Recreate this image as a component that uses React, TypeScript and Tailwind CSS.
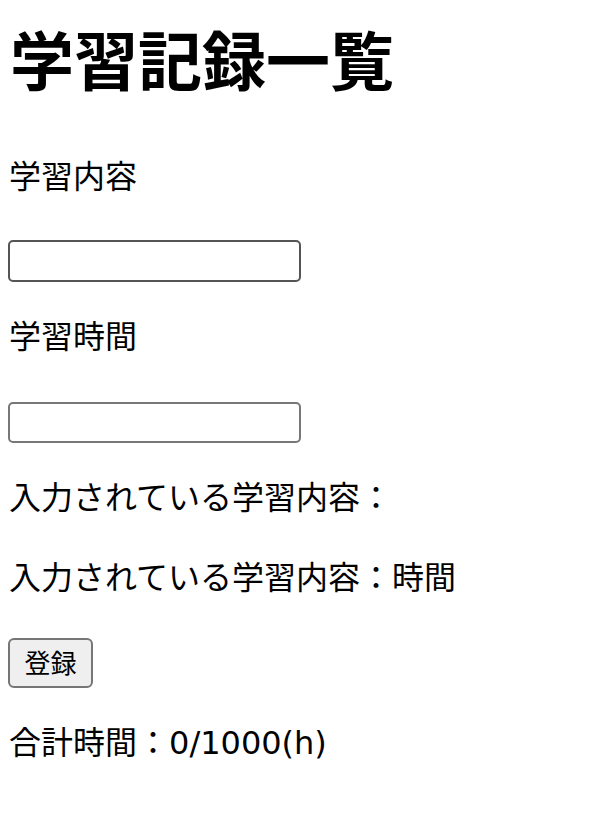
export default function App() {
  const font = { fontFamily: '"Noto Sans", "Noto Sans CJK JP", sans-serif' };
  return (
    <div className="flex flex-col items-start px-2 text-black bg-white min-h-[816px]" style={font}>
      <h1 className="mt-[21px] text-[64px] font-bold leading-[80px] pl-[2px]">学習記録一覧</h1>
      <p className="mt-[51px] text-[32px] leading-[48px] pl-[1px]">学習内容</p>
      <input
        type="text"
        className="mt-[40px] w-[293px] h-[42px] border-2 border-[#555555] rounded-[5px] bg-white"
      />
      <p className="mt-[30px] text-[32px] leading-[48px] pl-[1px]">学習時間</p>
      <input
        type="text"
        className="mt-[42px] w-[293px] h-[41px] border-2 border-[#777777] rounded-[5px] bg-white"
      />
      <p className="mt-[30px] text-[32px] leading-[48px] pl-[1px]">入力されている学習内容：</p>
      <p className="mt-[32px] text-[32px] leading-[48px] pl-[1px]">入力されている学習内容：時間</p>
      <button className="mt-[37px] w-[85px] h-[50px] text-[26px] bg-[#efefef] border-2 border-[#767676] rounded-[6px] leading-none">
        登録
      </button>
      <p className="mt-[30px] text-[32px] leading-[48px] pl-[1px]">
        合計時間：<span className="font-['DejaVu_Sans']">0/1000(h)</span>
      </p>
    </div>
  );
}
